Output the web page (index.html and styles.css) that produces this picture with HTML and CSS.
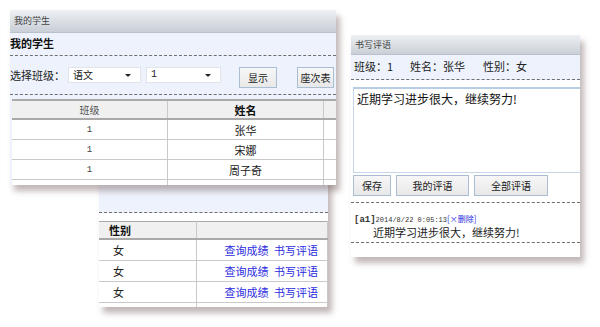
FILE: index.html
```html
<!DOCTYPE html>
<html lang="zh-CN">
<head>
    <meta charset="UTF-8">
    <title>我的学生</title>
    <link rel="stylesheet" href="styles.css">
</head>
<body>
    <div class="desk">
        <!-- back window: student list, scrolled -->
        <div class="win win-list">
            <div class="win-header">我的学生</div>
            <div class="blue-area"></div>
            <table class="grid grid-list">
                <tr class="head">
                    <th class="col-sex">性别</th>
                    <th></th>
                </tr>
                <tr>
                    <td class="col-sex">女</td>
                    <td class="ops"><a href="#">查询成绩</a> <a href="#">书写评语</a></td>
                </tr>
                <tr>
                    <td class="col-sex">女</td>
                    <td class="ops"><a href="#">查询成绩</a> <a href="#">书写评语</a></td>
                </tr>
                <tr>
                    <td class="col-sex">女</td>
                    <td class="ops"><a href="#">查询成绩</a> <a href="#">书写评语</a></td>
                </tr>
                <tr class="tail">
                    <td></td>
                    <td></td>
                </tr>
            </table>
        </div>

        <!-- front window: my students -->
        <div class="win win-students">
            <div class="win-header">我的学生</div>
            <div class="win-body">
                <div class="page-title">我的学生</div>
                <div class="filter-row">
                    <span class="label">选择班级：</span>
                    <div class="select sel-subject">语文<span class="arrow"></span></div>
                    <div class="select sel-class">1<span class="arrow"></span></div>
                    <button class="btn btn-show">显示</button>
                    <button class="btn btn-seat">座次表</button>
                </div>
                <table class="grid grid-students">
                    <tr class="head">
                        <th class="light">班级</th>
                        <th>姓名</th>
                        <th></th>
                    </tr>
                    <tr><td class="num">1</td><td>张华</td><td></td></tr>
                    <tr><td class="num">1</td><td>宋娜</td><td></td></tr>
                    <tr><td class="num">1</td><td>周子奇</td><td></td></tr>
                    <tr><td></td><td></td><td></td></tr>
                </table>
            </div>
        </div>

        <!-- comment window -->
        <div class="win win-comment">
            <div class="win-header">书写评语</div>
            <div class="info-row">
                <span class="info info-class">班级：1</span>
                <span class="info info-name">姓名：张华</span>
                <span class="info">性别：女</span>
            </div>
            <textarea class="comment-box">近期学习进步很大，继续努力!</textarea>
            <div class="btn-row">
                <button class="btn btn-save">保存</button>
                <button class="btn btn-mine">我的评语</button>
                <button class="btn btn-all">全部评语</button>
            </div>
            <div class="history">
                <div class="meta"><b>[a1]</b><span class="time">2014/8/22 0:05:13</span><a href="#" class="del">[×删除]</a></div>
                <div class="history-text">近期学习进步很大，继续努力!</div>
            </div>
        </div>
    </div>
</body>
</html>
```

FILE: styles.css
```css
:root {
    --blue-bg: #edf2fc;
    --dash: #6f6f6f;
    --grid-line: #c9c9c9;
    --link: #2b2bdf;
    --font-cn: "Noto Sans CJK SC", "DejaVu Sans", sans-serif;
}
html, body {
    margin: 0;
    padding: 0;
    background: #fff;
}
body {
    font-family: var(--font-cn);
    font-size: 11px;
    color: #222;
    width: 600px;
    height: 327px;
    overflow: hidden;
}
.desk {
    position: relative;
    width: 600px;
    height: 327px;
}
.win {
    position: absolute;
    background: #fff;
    overflow: hidden;
    box-shadow: 4px 6px 6px rgba(120, 95, 95, 0.45);
}
.win-header {
    height: 22px;
    line-height: 22px;
    padding-left: 4px;
    font-size: 9px;
    color: #444;
    background: linear-gradient(#eef1f4, #c8cfd6);
    border-bottom: 1px solid #b9c2cb;
}

/* front window */
.win-students {
    left: 10px;
    top: 10px;
    width: 326px;
    height: 175px;
    z-index: 2;
}
.win-body {
    background: var(--blue-bg);
}
.page-title {
    height: 22px;
    line-height: 20px;
    font-size: 11px;
    font-weight: bold;
    color: #111;
    border-bottom: 1px dashed var(--dash);
}
.filter-row {
    height: 38px;
    display: flex;
    align-items: center;
    border-bottom: 1px dashed var(--dash);
    margin-bottom: 4px;
}
.label {
    width: 58px;
}
.select {
    position: relative;
    height: 14px;
    line-height: 14px;
    padding-left: 4px;
    background: #fff;
    border: 1px solid #dfe3ea;
    font-size: 10px;
}
.sel-subject {
    width: 67px;
    margin-right: 5px;
}
.sel-class {
    width: 69px;
    font-family: "Liberation Mono", monospace;
    margin-right: 18px;
}
.arrow {
    position: absolute;
    right: 9px;
    top: 6px;
    border-left: 3px solid transparent;
    border-right: 3px solid transparent;
    border-top: 3px solid #222;
}
.btn {
    font-family: var(--font-cn);
    font-size: 10px;
    color: #222;
    height: 21px;
    padding: 0;
    line-height: 19px;
    background: linear-gradient(#f7f7f7, #e8e8e8);
    border: 1px solid #a9bdd3;
    border-radius: 0;
}
.btn-show {
    width: 38px;
    margin-top: 4px;
    margin-right: 20px;
}
.btn-seat {
    width: 37px;
    margin-top: 4px;
}

/* tables */
.grid {
    border-collapse: collapse;
    background: #fff;
    table-layout: fixed;
}
.grid td,
.grid th {
    padding: 0;
    border-bottom: 1px solid var(--grid-line);
    border-right: 1px solid var(--grid-line);
    font-weight: normal;
}
.grid .head th {
    background: #f0f0f0;
    border-top: 2px solid #a9a9a9;
    border-bottom: 2px solid #a9a9a9;
    font-weight: bold;
    color: #111;
}
.grid-students {
    margin-left: 2px;
    width: 465px;
    text-align: center;
}
.grid-students td,
.grid-students th {
    width: 155px;
    height: 19px;
}
.grid-students .head th {
    height: 17px;
}
.grid-students th.light {
    font-weight: normal;
    color: #555;
    font-size: 10px;
}
.grid-students .num {
    font-family: "Liberation Mono", monospace;
    font-size: 9px;
    color: #444;
}

/* back window */
.win-list {
    left: 99px;
    top: 140px;
    width: 229px;
    height: 167px;
    z-index: 1;
}
.blue-area {
    height: 49px;
    background: var(--blue-bg);
    border-bottom: 1px dashed var(--dash);
    margin-bottom: 8px;
}
.grid-list {
    width: 229px;
}
.grid-list td,
.grid-list th {
    height: 20px;
}
.grid-list .head th {
    height: 15px;
    border-top-width: 1px;
    text-align: left;
}
.grid-list .col-sex {
    width: 97px;
}
.grid-list th.col-sex {
    padding-left: 10px;
    width: 87px;
}
.grid-list td.col-sex {
    padding-left: 14px;
    width: 83px;
}
.grid-list .ops {
    text-align: right;
    padding-right: 9px;
}
.grid-list .tail td {
    border-bottom: none;
}
.ops a {
    color: var(--link);
    text-decoration: none;
    margin-left: 3px;
}

/* comment window */
.win-comment {
    left: 351px;
    top: 35px;
    width: 229px;
    height: 222px;
    z-index: 2;
}
.win-comment .win-header {
    height: 19px;
    line-height: 19px;
}
.info-row {
    height: 24px;
    line-height: 22px;
    padding-left: 3px;
    background: var(--blue-bg);
    border-bottom: 1px dashed var(--dash);
    display: flex;
}
.info-class {
    width: 56px;
}
.info-name {
    width: 73px;
}
.comment-box {
    display: block;
    box-sizing: border-box;
    margin: 7px 0 2px 2px;
    width: 230px;
    height: 86px;
    padding: 1px 3px;
    font-family: var(--font-cn);
    font-size: 12px;
    line-height: 18px;
    color: #111;
    border: 1px solid #c5d6e8;
    border-top: 2px solid #b7cde3;
    resize: none;
    outline: none;
}
.btn-row {
    display: flex;
    gap: 5px;
    padding-left: 2px;
    padding-bottom: 6px;
    border-bottom: 1px dashed var(--dash);
}
.btn-save {
    width: 38px;
}
.btn-mine {
    width: 73px;
}
.btn-all {
    width: 74px;
}
.history {
    padding: 9px 0 3px 3px;
    border-bottom: 1px dashed var(--dash);
}
.meta {
    height: 13px;
    line-height: 13px;
    font-size: 8px;
    color: #333;
}
.meta b {
    font-family: "Liberation Mono", monospace;
    font-size: 9px;
}
.time {
    font-family: "Liberation Mono", monospace;
    font-size: 7px;
}
.del {
    color: var(--link);
    text-decoration: none;
    font-size: 8px;
}
.history-text {
    padding-left: 19px;
    line-height: 14px;
    font-size: 11px;
}
```
